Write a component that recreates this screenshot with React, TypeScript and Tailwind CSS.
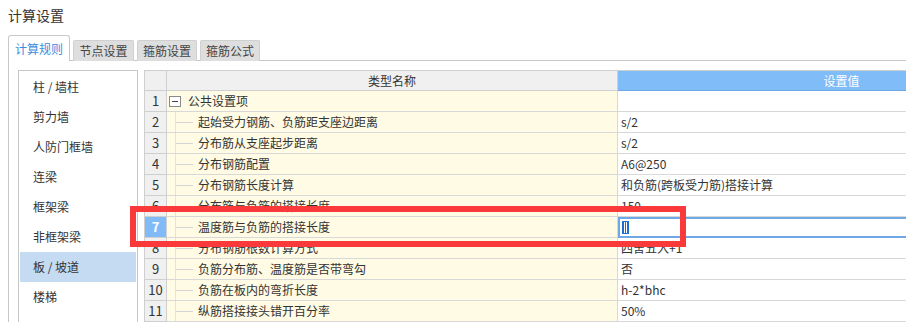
import React from "react";

const rows: { n: number; name: string; value: string }[] = [
  { n: 1, name: "公共设置项", value: "" },
  { n: 2, name: "起始受力钢筋、负筋距支座边距离", value: "s/2" },
  { n: 3, name: "分布筋从支座起步距离", value: "s/2" },
  { n: 4, name: "分布钢筋配置", value: "A6@250" },
  { n: 5, name: "分布钢筋长度计算", value: "和负筋(跨板受力筋)搭接计算" },
  { n: 6, name: "分布筋与负筋的搭接长度", value: "150" },
  { n: 7, name: "温度筋与负筋的搭接长度", value: "" },
  { n: 8, name: "分布钢筋根数计算方式", value: "四舍五入+1" },
  { n: 9, name: "负筋分布筋、温度筋是否带弯勾", value: "否" },
  { n: 10, name: "负筋在板内的弯折长度", value: "h-2*bhc" },
  { n: 11, name: "纵筋搭接接头错开百分率", value: "50%" },
];

const listItems = ["柱 / 墙柱", "剪力墙", "人防门框墙", "连梁", "框架梁", "非框架梁", "板 / 坡道", "楼梯"];

export default function App() {
  return (
    <div
      className="relative w-[906px] h-[322px] overflow-hidden bg-white text-[#333]"
      style={{ fontFamily: '"Noto Sans CJK SC", "Noto Sans", sans-serif' }}
    >
      <div className="pl-2 pt-[5px] text-[14px] leading-[20px] text-[#333]">计算设置</div>

      {/* tabs */}
      <div className="mt-[11px] flex items-end pl-2 h-[25px] relative z-10 -mb-px">
        <div className="w-[62px] h-[26px] bg-white border border-b-0 border-[#c8c8c8] rounded-t-[3px] flex items-center justify-center text-[12px] text-[#3b8ce3]">
          计算规则
        </div>
        <div className="ml-[3px] w-[61px] h-[21px] bg-[#dedede] border border-b-0 border-[#d0d0d0] rounded-t-[2px] flex items-center justify-center text-[12px] text-[#444]">
          节点设置
        </div>
        <div className="ml-[3px] w-[60px] h-[21px] bg-[#dedede] border border-b-0 border-[#d0d0d0] rounded-t-[2px] flex items-center justify-center text-[12px] text-[#444]">
          箍筋设置
        </div>
        <div className="ml-[3px] w-[60px] h-[21px] bg-[#dedede] border border-b-0 border-[#d0d0d0] rounded-t-[2px] flex items-center justify-center text-[12px] text-[#444]">
          箍筋公式
        </div>
      </div>

      {/* panel */}
      <div className="ml-2 border-l border-t border-[#c8c8c8] h-[400px] flex pl-[9px] pt-[9px]">
        {/* left list */}
        <div className="w-[120px] h-[380px] shrink-0 border border-[#c8c8c8] pt-[1px]">
          {listItems.map((t) => (
            <div
              key={t}
              className={
                "h-[30px] flex items-center pl-[13px] mx-px text-[12px] " +
                (t === "板 / 坡道" ? "bg-[#c4dbf2]" : "")
              }
            >
              {t}
            </div>
          ))}
        </div>

        {/* table */}
        <div className="ml-[6px] w-[1000px] h-[380px] shrink-0 border-l border-t border-[#cfcfcf] text-[12px]">
          {/* header */}
          <div className="flex h-[20px]">
            <div className="w-[22px] shrink-0 bg-[#f0f0f0] border-r border-b border-[#cfcfcf]" />
            <div className="w-[451px] shrink-0 bg-[#f0f0f0] border-r border-b border-[#cfcfcf] flex items-center justify-center text-[#333]">
              类型名称
            </div>
            <div className="w-[448px] shrink-0 bg-[#80bcf8] border-b border-r border-[#6ea8e4] flex items-center justify-center text-white">
              设置值
            </div>
          </div>
          {rows.map((r) => {
            const sel = r.n === 7;
            return (
              <div key={r.n} className="flex h-[21px]">
                <div
                  className={
                    "w-[22px] shrink-0 border-r border-b border-[#cfcfcf] flex items-center justify-center " +
                    (sel ? "bg-[#80bbf7] text-white font-bold text-[13px]" : "bg-[#f0f0f0] text-[#333] text-[13px]")
                  }
                >
                  {r.n}
                </div>
                <div className="relative w-[451px] shrink-0 bg-[#fffbe4] border-r border-b border-[#d8d8d8] flex items-center">
                  {r.n === 1 ? (
                    <>
                      <div className="ml-[2px] w-[12px] h-[11px] border border-[#8a8a8a] bg-white flex items-center justify-center">
                        <div className="w-[6px] h-px bg-[#444]" />
                      </div>
                      <span className="ml-[7px]">{r.name}</span>
                    </>
                  ) : (
                    <>
                      <div className="absolute left-[8px] top-0 bottom-0 w-px bg-[#e2e2e2]" />
                      <div className="ml-[9px] w-[17px] h-px bg-[#d4d4d4]" />
                      <span className="ml-[5px]">{r.name}</span>
                    </>
                  )}
                </div>
                <div
                  className={
                    "w-[448px] shrink-0 flex items-center " +
                    (sel ? "border-2 border-[#6ea8e6] pl-[2px]" : "border-b border-[#d8d8d8] pl-[3px]")
                  }
                >
                  {sel ? (
                    <div className="w-[7px] h-[13px] bg-[#1e6fd4] flex items-center justify-center gap-[1px]">
                      <div className="w-px h-[11px] bg-white" />
                      <div className="w-px h-[11px] bg-white" />
                    </div>
                  ) : (
                    r.value
                  )}
                </div>
              </div>
            );
          })}
        </div>
      </div>

      {/* red annotation box */}
      <div className="absolute left-[130px] top-[206px] w-[556px] h-[41px] border-[6px] border-[#fa3a3a] pointer-events-none" />
    </div>
  );
}
